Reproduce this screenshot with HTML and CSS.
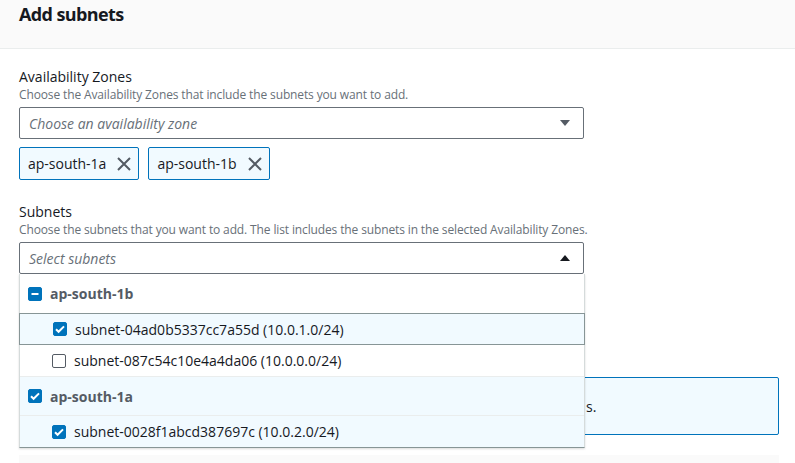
FILE: index.html
```html
<!DOCTYPE html>
<html>
<head>
<meta charset="utf-8">
<link rel="stylesheet" href="styles.css">
</head>
<body>
<div class="page">
  <div class="header"><h2 class="title">Add subnets</h2></div>
  <div class="content">
    <div class="field">
      <div class="label">Availability Zones</div>
      <div class="desc">Choose the Availability Zones that include the subnets you want to add.</div>
      <div class="select">
        <span class="placeholder">Choose an availability zone</span>
        <svg class="caret" width="12" height="12" viewBox="0 0 12 12"><path d="M1 3h10L6 9z" fill="#545b64"/></svg>
      </div>
      <div class="tokens">
        <div class="token"><span>ap-south-1a</span><svg width="16" height="16" viewBox="0 0 16 16"><path d="M2 2l12 12M14 2L2 14" stroke="#545b64" stroke-width="2" fill="none"/></svg></div>
        <div class="token"><span>ap-south-1b</span><svg width="16" height="16" viewBox="0 0 16 16"><path d="M2 2l12 12M14 2L2 14" stroke="#545b64" stroke-width="2" fill="none"/></svg></div>
      </div>
    </div>
    <div class="field field2">
      <div class="label">Subnets</div>
      <div class="desc">Choose the subnets that you want to add. The list includes the subnets in the selected Availability Zones.</div>
      <div class="select open">
        <span class="placeholder">Select subnets</span>
        <svg class="caret" width="12" height="12" viewBox="0 0 12 12"><path d="M1 9h10L6 3z" fill="#16191f"/></svg>
      </div>
      <div class="under">
        <div class="info"><span class="info-text">s.</span></div>
        <div class="bar"></div>
        <div class="dropdown">
          <div class="opt group">
            <span class="cb on"><svg width="14" height="14" viewBox="0 0 14 14"><path d="M3.5 7h7" stroke="#fff" stroke-width="2"/></svg></span>
            <span class="gname">ap-south-1b</span>
          </div>
          <div class="opt child hl">
            <span class="cb on"><svg width="14" height="14" viewBox="0 0 14 14"><path d="M3 7.2l2.6 2.6L11 4.4" stroke="#fff" stroke-width="2" fill="none"/></svg></span>
            <span>subnet-04ad0b5337cc7a55d (10.0.1.0/24)</span>
          </div>
          <div class="opt child">
            <span class="cb"></span>
            <span>subnet-087c54c10e4a4da06 (10.0.0.0/24)</span>
          </div>
          <div class="opt group sel">
            <span class="cb on"><svg width="14" height="14" viewBox="0 0 14 14"><path d="M3 7.2l2.6 2.6L11 4.4" stroke="#fff" stroke-width="2" fill="none"/></svg></span>
            <span class="gname">ap-south-1a</span>
          </div>
          <div class="opt child sel last">
            <span class="cb on"><svg width="14" height="14" viewBox="0 0 14 14"><path d="M3 7.2l2.6 2.6L11 4.4" stroke="#fff" stroke-width="2" fill="none"/></svg></span>
            <span>subnet-0028f1abcd387697c (10.0.2.0/24)</span>
          </div>
        </div>
      </div>
    </div>
  </div>
</div>
</body>
</html>
```
FILE: styles.css
```css
* { box-sizing: border-box; }
html, body { margin: 0; padding: 0; background: #fff; }
body { font-family: "Open Sans", "Noto Sans", sans-serif; color: #16191f; width: 795px; height: 463px; overflow: hidden; }
.header { background: #fafafa; border-bottom: 1px solid #eaeded; height: 49px; padding: 0 19px; }
.title { margin: 0; font-size: 18px; font-weight: 700; letter-spacing: -0.6px; line-height: 28px; padding-top: 0; }
.content { padding: 18px 19px 0 19px; }
.field { width: 760px; }
.label { font-size: 14px; line-height: 20px; }
.desc { font-size: 12px; letter-spacing: -0.13px; line-height: 16px; color: #687078; }
.select { width: 565px; margin-top: 4px; height: 32px; border: 1px solid #687078; border-radius: 2px; display: flex; align-items: center; justify-content: space-between; padding: 0 12px 0 9px; }
.placeholder { font-style: italic; color: #687078; font-size: 14px; }
.tokens { display: flex; gap: 9px; margin-top: 8px; }
.token { height: 33px; border: 1px solid #0073bb; border-radius: 2px; background: #f1faff; display: flex; align-items: center; gap: 10px; padding: 0 6px 0 8px; font-size: 14px; }
.field2 { margin-top: 22px; }
.under { position: relative; height: 190px; }
.dropdown { position: absolute; left: 0; top: 0; width: 566px; background: #fff; border: 1px solid #d5dbdb; border-top: none; border-bottom: 1px solid #879596; box-shadow: 0 1px 2px rgba(0,0,0,0.15); }
.opt { display: flex; align-items: center; font-size: 14px; border-top: 1px solid #eaeded; }
.opt:first-child { border-top: none; }
.group { height: 39px; padding-left: 8px; }
.child { height: 31px; padding-left: 32px; }
.last { height: 32px; }
.gname { font-weight: 700; color: #545b64; }
.cb { width: 14px; height: 14px; border: 1px solid #545b64; border-radius: 2px; margin-right: 8px; display: flex; background: #fff; }
.cb.on { background: #0073bb; border-color: #0073bb; }
.cb svg { margin: -1px; }
.hl { height: 32px; background: #f1faff; border: 1px solid #879596; margin: 0 -1px; padding-left: 33px; }
.hl + .opt { border-top: none; }
.sel { background: #f1faff; }
.info { position: absolute; left: 0; top: 103px; width: 760px; height: 58px; border: 1px solid #0073bb; border-radius: 2px; background: #f1faff; font-size: 14px; padding: 19px 0 0 566px; }
.bar { position: absolute; left: 0; top: 181px; width: 760px; height: 20px; background: #fafafa; }
```
